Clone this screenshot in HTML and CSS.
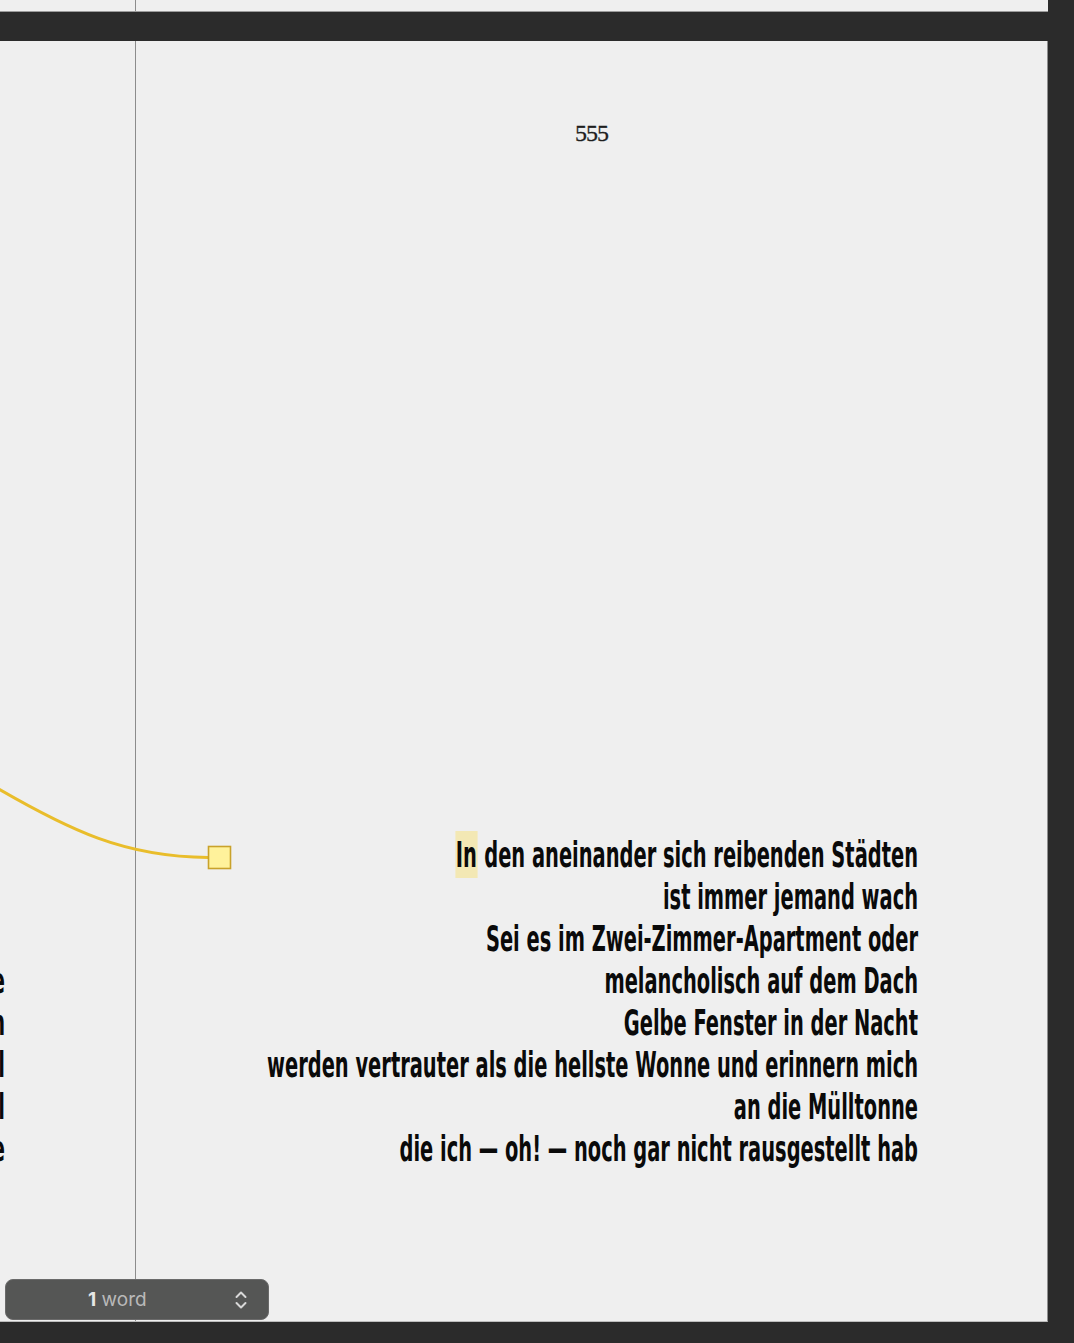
FILE: index.html
```html
<!DOCTYPE html>
<html>
<head>
<meta charset="utf-8">
<link rel="stylesheet" href="styles.css">
</head>
<body>
<div class="screen">
  <div class="strip">
    <div class="strip-guide"></div>
  </div>
  <div class="page">
    <div class="spread">
      <div class="prev">
        <div class="verse prev-verse">
          <div class="line"><span class="t">und die Bühne</span></div>
          <div class="line"><span class="t">in den Wohnungen wohnen</span></div>
          <div class="line"><span class="t">ohne jede Wahl</span></div>
          <div class="line"><span class="t">hart wie Stahl</span></div>
          <div class="line"><span class="t">und leise die Seele</span></div>
        </div>
      </div>
      <div class="guide"></div>
      <div class="main">
        <div class="folio">555</div>
        <div class="poem">
          <div class="verse">
            <div class="line"><span class="t"><span class="mark">In</span> den aneinander sich reibenden Städten</span></div>
            <div class="line"><span class="t">ist immer jemand wach</span></div>
            <div class="line"><span class="t">Sei es im Zwei-Zimmer-Apartment oder</span></div>
            <div class="line"><span class="t">melancholisch auf dem Dach</span></div>
            <div class="line"><span class="t">Gelbe Fenster in der Nacht</span></div>
            <div class="line"><span class="t">werden vertrauter als die hellste Wonne und erinnern mich</span></div>
            <div class="line"><span class="t">an die Mülltonne</span></div>
            <div class="line"><span class="t">die ich — oh! — noch gar nicht rausgestellt hab</span></div>
          </div>
        </div>
      </div>
    </div>
    <svg class="connector" width="240" height="900" viewBox="0 0 240 900">
      <path d="M-10,743 C70,790 125,816 208,816.5" fill="none" stroke="#e9bd2b" stroke-width="3" stroke-linecap="round"/>
      <rect x="208.5" y="805.5" width="22" height="22" fill="#fff29b" stroke="#c9a22b" stroke-width="1.6"/>
    </svg>
    <div class="counter">
      <span class="count-text"><b>1</b> word</span>
      <svg class="chev" width="14" height="22" viewBox="0 0 14 22">
        <path d="M2.5,8 L7,3.5 L11.5,8" fill="none" stroke="#d8d8d8" stroke-width="2" stroke-linecap="round" stroke-linejoin="round"/>
        <path d="M2.5,14 L7,18.5 L11.5,14" fill="none" stroke="#d8d8d8" stroke-width="2" stroke-linecap="round" stroke-linejoin="round"/>
      </svg>
    </div>
  </div>
</div>
</body>
</html>
```
FILE: styles.css
```css
html, body {
  margin: 0;
  padding: 0;
  background: #2b2b2b;
}
body {
  width: 1074px;
  height: 1343px;
  overflow: hidden;
}
.screen {
  display: flex;
  flex-direction: column;
  gap: 29px;
}
.strip {
  width: 1048px;
  height: 11px;
  background: #efefef;
  border-bottom: 1px solid #9c9c9c;
  box-sizing: content-box;
}
.strip-guide {
  width: 135px;
  height: 11px;
  border-right: 1px solid #8c8c8c;
}
.page {
  position: relative;
  width: 1047px;
  height: 1280px;
  background: #efefef;
  border-right: 1px solid #8f8f8f;
  border-bottom: 1px solid #bdbdbd;
  overflow: hidden;
}
.spread {
  display: flex;
  height: 100%;
}
.prev {
  flex: 0 0 900px;
  margin-left: -895px;
  padding-top: 919px;
  min-width: 0;
}
.guide {
  flex: 0 0 131px;
  box-sizing: border-box;
  border-right: 1px solid #8c8c8c;
}
.main {
  flex: 1 1 0;
  min-width: 0;
  display: flex;
  flex-direction: column;
}
.folio {
  margin-top: 80px;
  text-align: center;
  font-family: "Liberation Serif", "DejaVu Serif", serif;
  font-size: 24px;
  line-height: 24px;
  color: #1e1e1e;
  letter-spacing: -1px;
  -webkit-text-stroke: 0.3px #1e1e1e;
}
.poem {
  margin-top: 689px;
  padding-right: 129px;
  min-width: 0;
}
.verse {
  font-family: "DejaVu Sans Condensed", "DejaVu Sans", sans-serif;
  font-stretch: condensed;
  font-weight: bold;
  font-size: 36px;
  line-height: 42px;
  color: #0a0a0a;
  white-space: nowrap;
  transform: scaleX(0.6);
  transform-origin: right center;
}
.line {
  height: 42px;
  display: flex;
  justify-content: flex-end;
  align-items: center;
}
.t {
  flex: none;
  line-height: 42px;
}
.mark {
  background: #f3e8b4;
  padding: 3px 1px;
}
.connector {
  position: absolute;
  left: 0;
  top: 0;
}
.counter {
  position: absolute;
  left: 5px;
  top: 1238px;
  width: 264px;
  height: 41px;
  box-sizing: border-box;
  background: #555655;
  border: 1px solid #6a6a6a;
  border-radius: 8px;
  display: flex;
  align-items: center;
  padding-left: 82px;
  padding-right: 20px;
  font-family: "Inter", "Open Sans", sans-serif;
  font-size: 19px;
  color: #b9b9b9;
}
.count-text b {
  color: #e6e6e6;
  font-weight: 700;
}
.chev {
  margin-left: auto;
}
```
